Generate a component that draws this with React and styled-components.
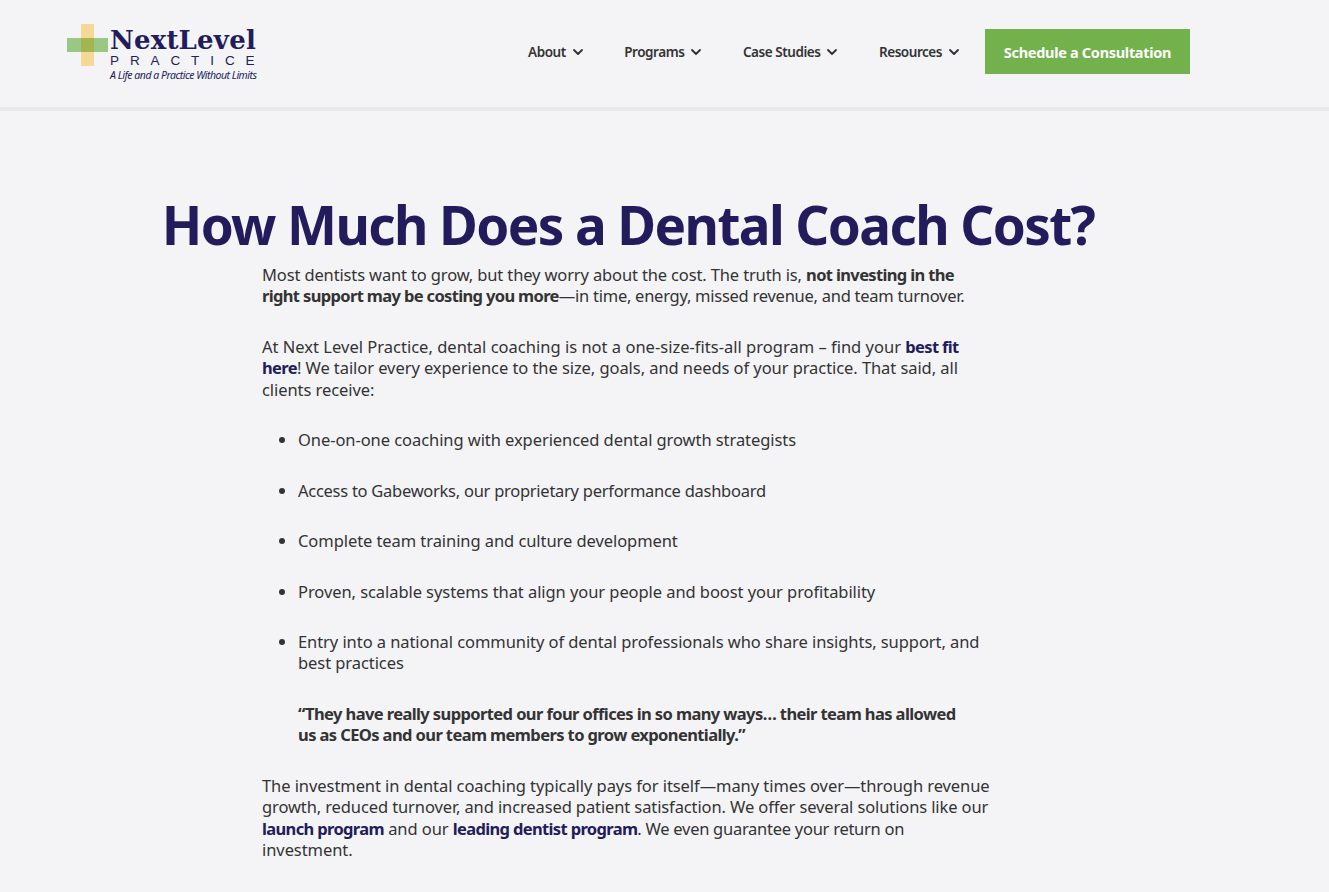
import React from "react";
import styled, { createGlobalStyle } from "styled-components";
import { ChevronDown } from "lucide-react";

const Global = createGlobalStyle`
  html, body { margin: 0; padding: 0; background: #f4f4f7; }
  body { font-family: "Noto Sans", "Open Sans", sans-serif; color: #333333; }
`;
const Header = styled.header`
  display: flex; align-items: center; height: 103px; padding: 0 139px 4px 67px; border-bottom: 4px solid #e9e9ec;
`;
const Logo = styled.a`
  display: flex; width: 192px; height: 60px; position: relative; flex: none; margin-right: auto; top: 2px;
`;
const Mark = styled.svg`
  position: absolute; left: 0; top: 0;
`;
const LogoText = styled.div`
  display: flex; flex-direction: column; margin-left: 43px; padding-top: 2px; color: #221c5c;
`;
const LogoName = styled.span`
  font: 700 26px/29px "DejaVu Serif", serif; letter-spacing: 0.2px; white-space: nowrap;
`;
const LogoSub = styled.span`
  font: 400 13.5px/13px "Liberation Sans", sans-serif; letter-spacing: 10.9px; white-space: nowrap; margin-top: -1px;
`;
const LogoTag = styled.span`
  font: italic 400 10.5px/13px "Noto Sans", sans-serif; letter-spacing: -0.48px; white-space: nowrap; margin-top: 2px;
`;
const Nav = styled.nav`
  display: flex; align-items: center;
`;
const NavItem = styled.a`
  display: flex; align-items: center; gap: 4px; margin-right: 38.5px;
  font-size: 13.5px; font-weight: 600; color: #333; letter-spacing: -0.45px; white-space: nowrap;
  &:nth-child(4) { margin-right: 23px; }
`;
const Cta = styled.a`
  display: flex; align-items: center; justify-content: center; width: 205px; height: 45px;
  background: #72b14b; color: #fff; font-size: 14.5px; font-weight: 700; letter-spacing: -0.3px;
`;
const Main = styled.main`
  width: 733px; margin-left: 262px;
`;
const Title = styled.h1`
  margin: 76px -101px 2px -102px; color: #221c5c; font-size: 53px; line-height: 75px; font-weight: 700;
  text-align: center; white-space: nowrap; letter-spacing: -1.6px;
`;
const Para = styled.p`
  margin: 0 0 29.4px; font-size: 16.5px; line-height: 21.33px; letter-spacing: -0.07px; white-space: nowrap;
`;
const Fit = styled.span`letter-spacing: ${(p) => p.$ls}px;`;
const Strong = styled.strong`font-weight: 700; letter-spacing: -0.65px;`;
const Lnk = styled.a`font-weight: 700; color: #221c5c; letter-spacing: -0.65px;`;
const List = styled.ul`
  margin: 0; padding: 0 0 0 36px;
`;
const Item = styled.li`
  margin: 0 0 29.1px; font-size: 16.5px; line-height: 21.33px; letter-spacing: -0.07px; white-space: nowrap;
`;
const Quote = styled.p`
  margin: 0 0 29.4px 36px; font-size: 16.5px; line-height: 21.33px; font-weight: 700; letter-spacing: -0.6px; white-space: nowrap;
`;

const nav = ["About", "Programs", "Case Studies", "Resources"];

export default function App() {
  return (
    <>
      <Global />
      <Header>
        <Logo>
          <Mark width="42" height="60" viewBox="0 0 42 60">
            <rect x="14" y="0" width="13" height="42" fill="#f6d996" />
            <rect x="0" y="14" width="41" height="14" fill="#8fc277" opacity=".9" />
            <rect x="14" y="14" width="13" height="14" fill="#a5b350" />
          </Mark>
          <LogoText>
            <LogoName>NextLevel</LogoName>
            <LogoSub>PRACTICE</LogoSub>
            <LogoTag>A Life and a Practice Without Limits</LogoTag>
          </LogoText>
        </Logo>
        <Nav>
          {nav.map((n) => (
            <NavItem key={n}>{n}<ChevronDown size={16} strokeWidth={2.8} /></NavItem>
          ))}
          <Cta>Schedule a Consultation</Cta>
        </Nav>
      </Header>
      <Main>
        <Title>How Much Does a Dental Coach Cost?</Title>
        <Para>
          <Fit $ls={-0.14}>Most dentists want to grow, but they worry about the cost. The truth is,</Fit> <Strong>not investing in the<br />
          right support may be costing you more</Strong><Fit $ls={-0.26}>—in time, energy, missed revenue, and team turnover.</Fit>
        </Para>
        <Para>
          <Fit $ls={0.01}>At Next Level Practice, dental coaching is not a one-size-fits-all program – find your</Fit> <Lnk>best fit<br />
          here</Lnk>! We tailor every experience to the size, goals, and needs of your practice. That said, all<br />
          clients receive:
        </Para>
        <List>
          <Item>One-on-one coaching with experienced dental growth strategists</Item>
          <Item><Fit $ls={-0.27}>Access to Gabeworks, our proprietary performance dashboard</Fit></Item>
          <Item>Complete team training and culture development</Item>
          <Item>Proven, scalable systems that align your people and boost your profitability</Item>
          <Item>Entry into a national community of dental professionals who share insights, support, and<br />best practices</Item>
        </List>
        <Quote>
          “They have really supported our four offices in so many ways… their team has allowed<br />
          us as CEOs and our team members to grow exponentially.”
        </Quote>
        <Para>
          The investment in dental coaching typically pays for itself—many times over—through revenue<br />
          <Fit $ls={-0.11}>growth, reduced turnover, and increased patient satisfaction. We offer several solutions like our</Fit><br />
          <Lnk>launch program</Lnk> and our <Lnk>leading dentist program</Lnk><Fit $ls={-0.27}>. We even guarantee your return on</Fit><br />
          investment.
        </Para>
      </Main>
    </>
  );
}
